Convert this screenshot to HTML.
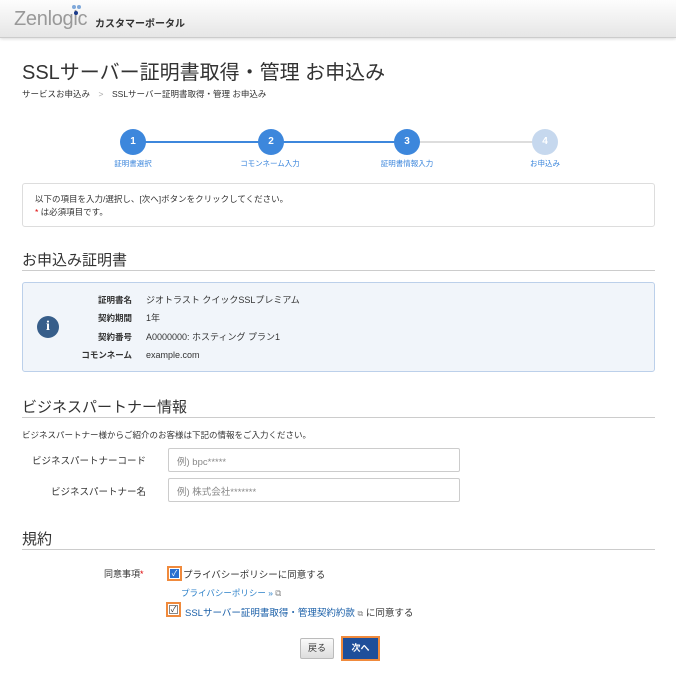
<!DOCTYPE html>
<html><head><meta charset="utf-8"><style>
*{box-sizing:border-box;margin:0;padding:0}
body{width:676px;height:678px;background:#fff;font-family:"Liberation Sans","Noto Sans CJK JP",sans-serif;color:#333;position:relative;overflow:hidden;font-size:10px}
.a{position:absolute;white-space:nowrap}
.hdr{position:absolute;left:0;top:0;width:676px;height:38px;background:linear-gradient(#fdfdfd,#e6e6e6);border-bottom:1px solid #ccc;box-shadow:0 1px 3px rgba(0,0,0,.15)}
.circ{position:absolute;width:26px;height:26px;border-radius:50%;background:#3d87dc;color:#fff;font-size:10px;font-weight:bold;text-align:center;line-height:26px}
.sl{position:absolute;font-size:7.5px;color:#3d87dc;text-align:center;width:100px}
h2{position:absolute;left:22px;font-size:15px;font-weight:normal;color:#333}
.hr{position:absolute;left:22px;width:633px;height:1px;background:#ccc}
.inp{position:absolute;left:168px;width:292px;height:24px;border:1px solid #ccc;border-radius:2px;font-size:9.5px;color:#888;padding:5px 8px}
.lbl{position:absolute;font-size:9.5px;color:#333;text-align:right;width:146px;left:0}
.cb{position:absolute;width:15px;height:15px;border:2px solid #f08a3c;background:#fff}
.cb span{position:absolute;left:1px;top:1px;width:9px;height:9px;border:1px solid #888;background:#fff;font-size:8px;line-height:8px;text-align:center}
</style></head><body>
<div class="hdr">
<div class="a" style="left:14px;top:8px;font-size:20px;color:#999;letter-spacing:-0.3px">Zenlogic</div>
<div class="a" style="left:72px;top:5px;width:4px;height:4px;border-radius:50%;background:#7fa8da"></div>
<div class="a" style="left:77px;top:5px;width:4px;height:4px;border-radius:50%;background:#7fa8da"></div>
<div class="a" style="left:74px;top:11px;width:4px;height:4px;border-radius:50%;background:#1a3a8a"></div>
<div class="a" style="left:95px;top:15px;font-size:10px;font-weight:bold;color:#333">カスタマーポータル</div>
</div>
<div class="a" style="left:22px;top:56px;font-size:20px;color:#333">SSLサーバー証明書取得・管理 お申込み</div>
<div class="a" style="left:22px;top:88px;font-size:8.5px;color:#333">サービスお申込み　<span style="color:#aaa">&gt;</span>　SSLサーバー証明書取得・管理 お申込み</div>

<div class="a" style="left:135px;top:141px;width:272px;height:2px;background:#3d87dc"></div>
<div class="a" style="left:407px;top:141px;width:138px;height:2px;background:#ddd"></div>
<div class="circ" style="left:120px;top:129px">1</div>
<div class="circ" style="left:258px;top:129px">2</div>
<div class="circ" style="left:394px;top:129px">3</div>
<div class="circ" style="left:532px;top:129px;background:#c6d8ee">4</div>
<div class="sl" style="left:83px;top:158px">証明書選択</div>
<div class="sl" style="left:220px;top:158px">コモンネーム入力</div>
<div class="sl" style="left:357px;top:158px">証明書情報入力</div>
<div class="sl" style="left:495px;top:158px">お申込み</div>

<div class="a" style="left:22px;top:183px;width:633px;height:44px;border:1px solid #ddd;border-radius:3px"></div>
<div class="a" style="left:35px;top:193px;font-size:8.5px">以下の項目を入力/選択し、[次へ]ボタンをクリックしてください。</div>
<div class="a" style="left:35px;top:206px;font-size:8.5px"><span style="color:#d00">*</span> は必須項目です。</div>

<h2 style="top:249px">お申込み証明書</h2>
<div class="hr" style="top:270px"></div>
<div class="a" style="left:22px;top:282px;width:633px;height:90px;background:#f1f5fa;border:1px solid #bcd0ea;border-radius:3px"></div>
<div class="a" style="left:37px;top:316px;width:22px;height:22px;border-radius:50%;background:#375e8a;color:#fff;font-weight:bold;font-size:14px;text-align:center;line-height:22px;font-family:'Liberation Serif',serif">i</div>
<div class="a" style="left:60px;top:291px;width:72px;text-align:right;font-size:8.5px;font-weight:bold;line-height:18.3px">証明書名<br>契約期間<br>契約番号<br>コモンネーム</div>
<div class="a" style="left:146px;top:291px;font-size:9px;line-height:18.3px">ジオトラスト クイックSSLプレミアム<br>1年<br>A0000000: ホスティング プラン1<br>example.com</div>

<h2 style="top:396px">ビジネスパートナー情報</h2>
<div class="hr" style="top:417px"></div>
<div class="a" style="left:22px;top:429px;font-size:8.5px">ビジネスパートナー様からご紹介のお客様は下記の情報をご入力ください。</div>
<div class="lbl" style="top:453px">ビジネスパートナーコード</div>
<div class="inp" style="top:448px">例) bpc*****</div>
<div class="lbl" style="top:484px">ビジネスパートナー名</div>
<div class="inp" style="top:478px">例) 株式会社*******</div>

<h2 style="top:528px">規約</h2>
<div class="hr" style="top:549px"></div>
<div class="a" style="left:104px;top:567px;font-size:9px">同意事項<span style="color:#d00">*</span></div>
<div class="cb" style="left:167px;top:566px"><span style="background:#2a6fd0;border-color:#2a6fd0;color:#fff">✓</span></div>
<div class="a" style="left:183px;top:567px;font-size:9.5px">プライバシーポリシーに同意する</div>
<div class="a" style="left:181px;top:587px;font-size:8.5px;color:#2a7fc8">プライバシーポリシー » <span style="color:#888">⧉</span></div>
<div class="cb" style="left:166px;top:602px"><span style="color:#333">✓</span></div>
<div class="a" style="left:185px;top:605px;font-size:9.5px;color:#1a5fa8">SSLサーバー証明書取得・管理契約約款 <span style="color:#888;font-size:8px">⧉</span> <span style="color:#333">に同意する</span></div>
<div class="a" style="left:300px;top:638px;width:34px;height:21px;border:1px solid #bbb;border-radius:2px;background:linear-gradient(#fafafa,#ddd);font-size:9px;text-align:center;line-height:19px">戻る</div>
<div class="a" style="left:341px;top:636px;width:39px;height:25px;border:2px solid #f08a3c;background:#1f4f9a;color:#fff;font-weight:bold;font-size:9px;text-align:center;line-height:21px">次へ</div>
</body></html>
